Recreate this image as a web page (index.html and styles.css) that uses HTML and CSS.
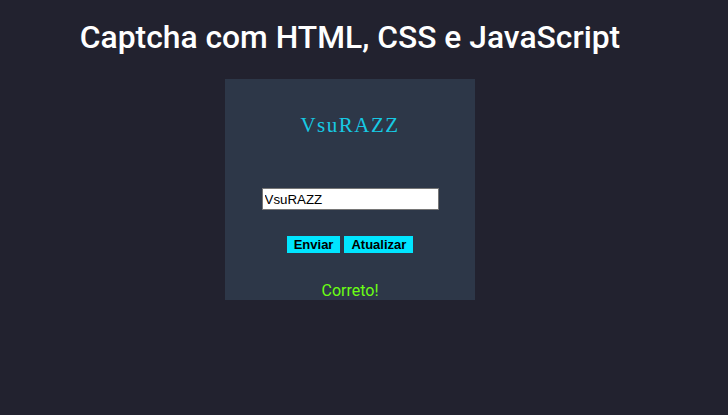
FILE: index.html
```html
<!DOCTYPE html>
<html lang="pt-BR">
<head>
  <meta charset="UTF-8" />
  <title>Captcha</title>
  <link rel="stylesheet" href="styles.css">
</head>
<body>
  <div class="page">
    <h1>Captcha com HTML, CSS e JavaScript</h1>
    <div class="captcha-box">
      <p class="captcha-code">VsuRAZZ</p>
      <input type="text" class="captcha-input" value="VsuRAZZ" />
      <div class="actions">
        <button>Enviar</button>
        <button>Atualizar</button>
      </div>
      <p class="message">Correto!</p>
    </div>
  </div>
</body>
</html>
```

FILE: styles.css
```css
body {
  margin: 0;
  background-color: #22222f;
  font-family: Roboto, sans-serif;
}

.page {
  width: 700px;
  text-align: center;
}

h1 {
  color: #ffffff;
  font-size: 31.8px;
  font-weight: 500;
  margin: 0;
  padding: 18px 0 0;
  height: 79px;
  box-sizing: border-box;
}

.captcha-box {
  width: 250px;
  height: 221px;
  margin: 0 auto;
  background-color: #2d3748;
  box-sizing: border-box;
  padding-top: 34px;
}

.captcha-code {
  margin: 0;
  font-family: "Liberation Serif", serif;
  font-size: 21px;
  letter-spacing: 1.5px;
  color: #17c9e3;
  line-height: 24px;
}

.captcha-input {
  display: block;
  margin: 51px auto 0;
  width: 177px;
  height: 22px;
  box-sizing: border-box;
  border: 1px solid #767676;
  padding: 1px 2px;
  font-family: "Liberation Sans", sans-serif;
  font-size: 13.33px;
}

.actions {
  margin-top: 26px;
  font-size: 0;
}

button {
  background-color: #00e5ff;
  border: none;
  color: #000;
  font-family: "Liberation Sans", sans-serif;
  font-weight: bold;
  font-size: 13px;
  height: 17px;
  padding: 0 7px;
  margin: 0 2px;
  line-height: 17px;
}

.message {
  margin: 28px 0 0;
  color: #6bff14;
  font-size: 16px;
  line-height: 19px;
}
```
